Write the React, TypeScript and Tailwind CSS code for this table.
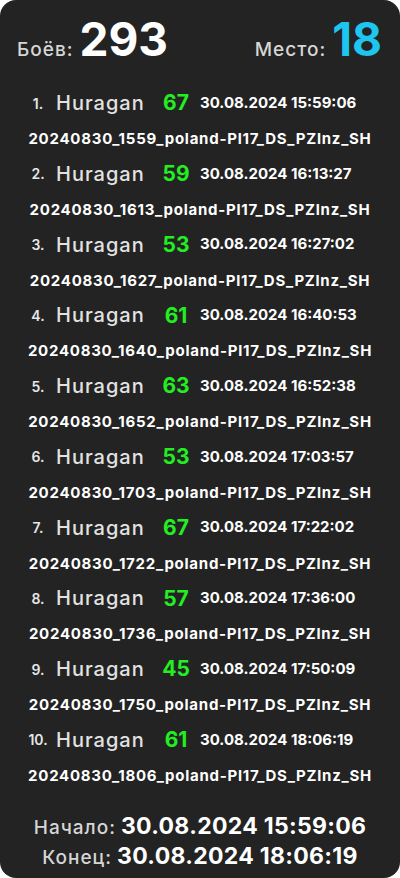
import React from "react";

const rows = [
  { n: "1.", s: "67", d: "30.08.2024 15:59:06", f: "20240830_1559_poland-Pl17_DS_PZlnz_SH" },
  { n: "2.", s: "59", d: "30.08.2024 16:13:27", f: "20240830_1613_poland-Pl17_DS_PZlnz_SH" },
  { n: "3.", s: "53", d: "30.08.2024 16:27:02", f: "20240830_1627_poland-Pl17_DS_PZlnz_SH" },
  { n: "4.", s: "61", d: "30.08.2024 16:40:53", f: "20240830_1640_poland-Pl17_DS_PZlnz_SH" },
  { n: "5.", s: "63", d: "30.08.2024 16:52:38", f: "20240830_1652_poland-Pl17_DS_PZlnz_SH" },
  { n: "6.", s: "53", d: "30.08.2024 17:03:57", f: "20240830_1703_poland-Pl17_DS_PZlnz_SH" },
  { n: "7.", s: "67", d: "30.08.2024 17:22:02", f: "20240830_1722_poland-Pl17_DS_PZlnz_SH" },
  { n: "8.", s: "57", d: "30.08.2024 17:36:00", f: "20240830_1736_poland-Pl17_DS_PZlnz_SH" },
  { n: "9.", s: "45", d: "30.08.2024 17:50:09", f: "20240830_1750_poland-Pl17_DS_PZlnz_SH" },
  { n: "10.", s: "61", d: "30.08.2024 18:06:19", f: "20240830_1806_poland-Pl17_DS_PZlnz_SH" },
];

export default function App() {
  return (
    <div className="w-[400px] h-[878px] bg-white" style={{ fontFamily: "Inter, 'Noto Sans', sans-serif" }}>
      <div className="w-full h-full bg-[#232323] rounded-2xl flex flex-col">
        <div className="flex items-baseline justify-between pl-[17px] pr-[18px] pt-[16px] h-[70px]">
          <div className="flex items-baseline gap-[6px]">
            <span className="text-[19px] font-medium tracking-[1px] text-[#d6d6d6]">Боёв:</span>
            <span className="text-[46px] font-bold text-white leading-none">293</span>
          </div>
          <div className="flex items-baseline gap-[6px]">
            <span className="text-[19px] font-medium tracking-[1px] text-[#d6d6d6]">Место:</span>
            <span className="text-[46px] font-bold text-[#1ec6ef] leading-none">18</span>
          </div>
        </div>
        <div className="flex flex-col mt-[15px]">
          {rows.map((r) => (
            <div key={r.n} className="flex flex-col">
              <div className="h-[36px] flex items-center pl-[24px]">
                <span className="w-[28px] text-center text-[14px] font-semibold text-[#e6e6e6]">{r.n}</span>
                <span className="ml-[4px] w-[102px] text-[20px] font-medium tracking-[1px] text-[#e2e2e2]">Huragan</span>
                <span className="w-[36px] text-center text-[21px] font-bold text-[#22ee22]">{r.s}</span>
                <span className="ml-[6px] text-[15px] font-bold text-white">{r.d}</span>
              </div>
              <div className="h-[34.75px] pt-[2px] flex items-center justify-center text-[15px] font-bold tracking-[0.75px] text-white">
                {r.f}
              </div>
            </div>
          ))}
        </div>
        <div className="flex flex-col items-center mt-[19px]">
          <div className="flex items-baseline gap-[5px] leading-[28px]">
            <span className="text-[19px] font-medium tracking-[1px] text-[#d6d6d6]">Начало:</span>
            <span className="text-[23px] font-bold tracking-[0.3px] text-white">30.08.2024 15:59:06</span>
          </div>
          <div className="flex items-baseline gap-[5px] leading-[28px]">
            <span className="text-[19px] font-medium tracking-[1px] text-[#d6d6d6]">Конец:</span>
            <span className="text-[23px] font-bold tracking-[0.3px] text-white">30.08.2024 18:06:19</span>
          </div>
        </div>
      </div>
    </div>
  );
}
